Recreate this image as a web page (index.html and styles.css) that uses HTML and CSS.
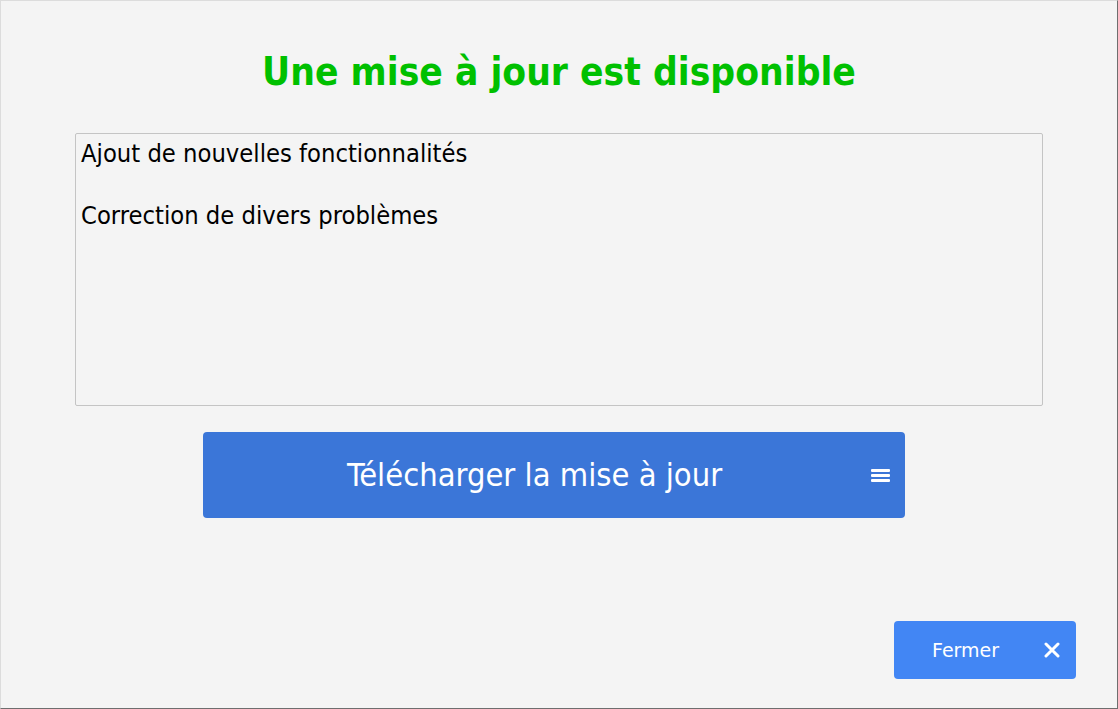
FILE: index.html
```html
<!DOCTYPE html>
<html>
<head>
    <title>Mise à jour</title>
    <link rel="stylesheet" href="styles.css">
</head>
<body>
    <div class="window">
        <h1 class="title">Une mise à jour est disponible</h1>

        <div class="notes">
            <p>Ajout de nouvelles fonctionnalités</p>
            <p>&nbsp;</p>
            <p>Correction de divers problèmes</p>
        </div>

        <div class="download-row">
            <button type="button" class="download">
                <span class="download-label">Télécharger la mise à jour</span>
                <svg class="menu-icon" width="19" height="15" viewBox="0 0 19 15">
                    <rect x="0" y="1" width="19" height="3" rx="1" fill="#fff"/>
                    <rect x="0" y="6" width="19" height="3" rx="1" fill="#fff"/>
                    <rect x="0" y="11" width="19" height="3" rx="1" fill="#fff"/>
                </svg>
            </button>
        </div>

        <div class="footer">
            <button type="button" class="close">
                <span>Fermer</span>
                <svg width="16" height="16" viewBox="0 0 16 16">
                    <path d="M2 2 L14 14 M14 2 L2 14" stroke="#fff" stroke-width="3" stroke-linecap="round"/>
                </svg>
            </button>
        </div>
    </div>
</body>
</html>
```

FILE: styles.css
```css
html, body {
    margin: 0;
    padding: 0;
    height: 100%;
}

body {
    font-family: "DejaVu Sans", Verdana, sans-serif;
    background-color: #f4f4f4;
}

.window {
    box-sizing: border-box;
    height: 709px;
    border: 1px solid #dcdcdc;
    border-right-color: #6e6e6e;
    border-bottom-color: #6e6e6e;
    display: flex;
    flex-direction: column;
    padding: 0 74px;
}

.title {
    margin: 48px 0 0;
    text-align: center;
    color: #00c000;
    font-family: "DejaVu Sans Condensed", "DejaVu Sans", sans-serif;
    font-stretch: condensed;
    font-size: 38.6px;
    font-weight: bold;
    line-height: 46px;
}

.notes {
    box-sizing: border-box;
    margin-top: 38px;
    height: 273px;
    border: 1px solid #c4c4c4;
    border-radius: 2px;
    padding: 4px 5px;
    font-family: "DejaVu Sans Condensed", "DejaVu Sans", sans-serif;
    font-stretch: condensed;
    font-size: 25.3px;
    line-height: 31px;
    color: #000;
}

.notes p {
    margin: 0;
}

.download-row {
    display: flex;
    justify-content: center;
    margin-top: 26px;
    padding-right: 10px;
}

.download {
    width: 702px;
    height: 86px;
    border: none;
    border-radius: 4px;
    background-color: #3b76d8;
    color: #fff;
    display: flex;
    align-items: center;
    justify-content: center;
    position: relative;
    padding: 0;
    cursor: pointer;
}

.download-label {
    font-family: "DejaVu Sans Condensed", "DejaVu Sans", sans-serif;
    font-stretch: condensed;
    font-size: 32.4px;
    margin-left: -39px;
}

.menu-icon {
    position: absolute;
    right: 15px;
    top: 36px;
}

.footer {
    margin-top: auto;
    margin-bottom: 29px;
    margin-right: -33px;
    display: flex;
    justify-content: flex-end;
}

.close {
    width: 182px;
    height: 58px;
    border: none;
    border-radius: 4px;
    background-color: #4286f4;
    color: #fff;
    font-family: "DejaVu Sans", sans-serif;
    font-size: 19px;
    display: flex;
    align-items: center;
    justify-content: space-between;
    padding: 0 16px 0 38px;
    cursor: pointer;
}
```
